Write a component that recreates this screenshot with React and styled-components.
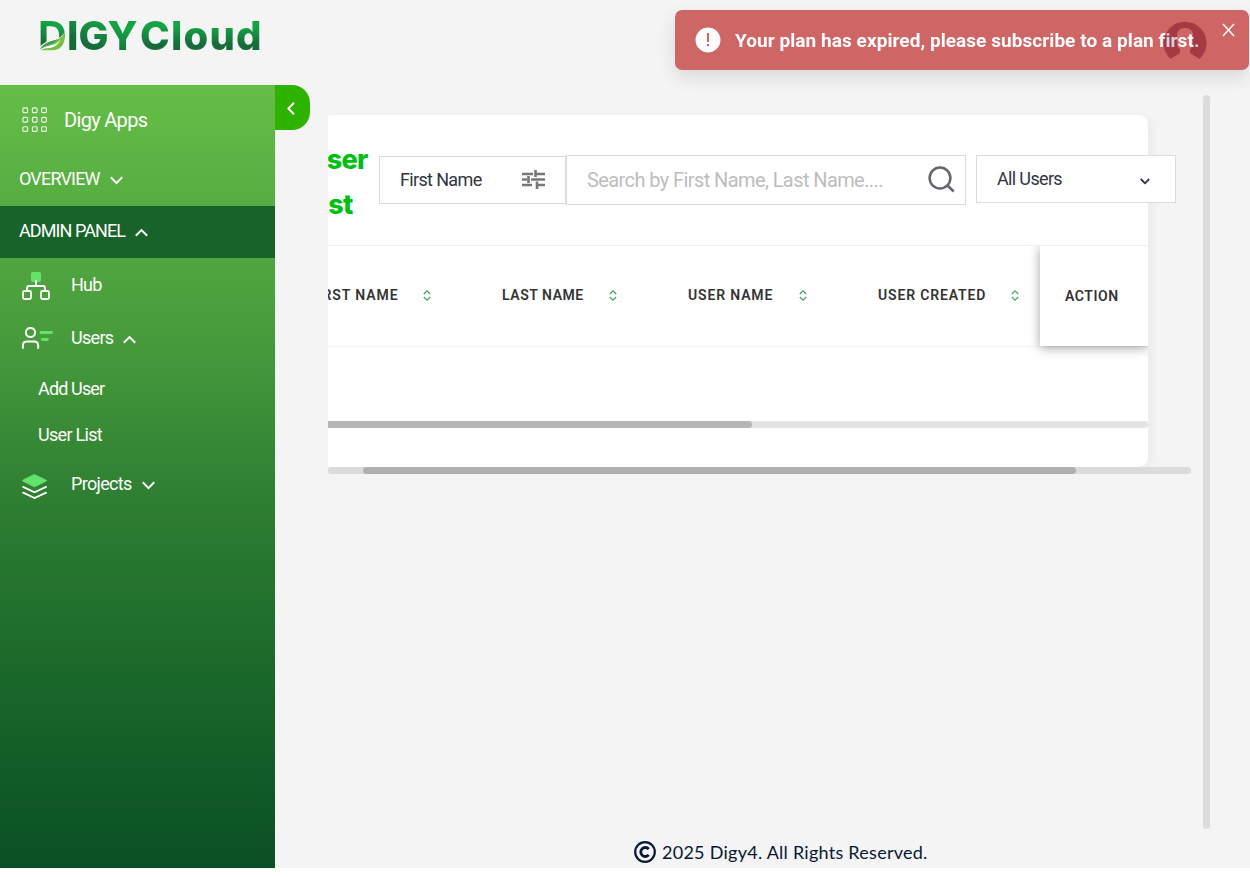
import React from "react";
import styled, { createGlobalStyle, css } from "styled-components";

const Global = createGlobalStyle`
  *{box-sizing:border-box}
  html,body{margin:0;background:#fff}
  body{width:1250px;height:877px;overflow:hidden;font-family:Roboto,"Noto Sans",sans-serif}
  button{border:0;padding:0;margin:0;background:none;font:inherit;color:inherit}
  svg{display:block;flex:none}
`;

const Page = styled.div`
  position: relative;
  width: 1250px;
  height: 868px;
  background: #f4f4f4;
  display: flex;
  flex-direction: column;
  overflow: hidden;
`;
const Header = styled.header`
  height: 85px;
  flex: none;
  padding: 15px 0 0 38px;
`;
const Logo = styled.div`
  position: relative;
  display: flex;
  width: 228px;
  height: 42px;
`;
const LogoWord = styled.span`
  font: ${(p) => p.$weight || 800} 40px/42px Inter, sans-serif;
  white-space: nowrap;
  letter-spacing: ${(p) => p.$spacing}px;
  width: ${(p) => p.$width}px;
  background: linear-gradient(${(p) => p.$angle}deg, #176b3b 30%, #15a344 72%);
  background-clip: text;
  -webkit-background-clip: text;
  color: transparent;
`;
const Leaf = styled.svg`
  position: absolute;
  left: 1px;
  top: 14px;
`;
const Body = styled.div`
  flex: 1;
  display: flex;
  min-height: 0;
`;
const Sidebar = styled.nav`
  width: 275px;
  flex: none;
  color: #fff;
  background: linear-gradient(180deg, #65be48 0%, #54aa40 18%, #46993b 34%, #2e7e32 53%, #1a672a 76%, #095024 100%);
`;
const NavRow = styled.div`
  display: flex;
  align-items: center;
  height: ${(p) => p.$h}px;
  padding-left: ${(p) => p.$pad || 0}px;
  padding-bottom: ${(p) => p.$lift || 0}px;
  background: ${(p) => (p.$active ? "#186329" : "transparent")};
`;
const IconSlot = styled.span`
  width: ${(p) => p.$w}px;
  padding-top: ${(p) => p.$drop || 0}px;
  flex: none;
`;
const NavText = styled.span`
  font-size: ${(p) => p.$size || 18}px;
  letter-spacing: ${(p) => p.$ls || 0}px;
  line-height: 24px;
  white-space: nowrap;
`;
const Arrow = styled.svg`
  margin: 2px 0 0 ${(p) => p.$gap || 9}px;
`;
const Collapse = styled.button`
  width: 35px;
  height: 45px;
  flex: none;
  padding: 2px 3px 0 0;
  border-radius: 0 18px 18px 0;
  background: #2eb400;
  display: grid;
  place-items: center;
`;
const Main = styled.main`
  flex: 1;
  min-width: 0;
  display: flex;
  flex-direction: column;
`;
const Scroller = styled.div`
  height: 744px;
  display: flex;
  justify-content: space-between;
  padding: 10px 40px 0 18px;
`;
const Content = styled.div`
  width: 863px;
  padding-top: 20px;
`;
const Rail = styled.div`
  width: 7px;
  height: 734px;
  border-radius: 4px;
  background: #dbdbdb;
`;
const Card = styled.section`
  width: 820px;
  height: 352px;
  background: #fff;
  border-radius: 0 9px 9px 0;
  box-shadow: 4px 2px 8px rgba(0, 0, 0, 0.045);
`;
const Toolbar = styled.div`
  width: 848px;
  height: 130px;
  display: flex;
  padding-top: 39.5px;
`;
const TitleClip = styled.div`
  width: 51px;
  height: 92px;
  margin-top: -18px;
  overflow: hidden;
  display: flex;
  flex-direction: column;
`;
const TitleLine = styled.span`
  font: 800 27px/45px Inter, sans-serif;
  color: #00bf13;
  letter-spacing: ${(p) => p.$ls}px;
  margin-left: ${(p) => p.$shift}px;
  white-space: nowrap;
`;
const Field = styled.div`
  display: flex;
  justify-content: space-between;
  align-items: center;
  width: ${(p) => p.$w}px;
  height: ${(p) => p.$h}px;
  margin: ${(p) => p.$m || "0"};
  padding: 0 ${(p) => p.$right}px 0 20px;
  border: 1px solid #dcdcdc;
  background: #fff;
  color: ${(p) => p.$color || "#303441"};
  font-size: ${(p) => p.$size || 18}px;
  letter-spacing: ${(p) => p.$ls || 0}px;
  white-space: nowrap;
`;
const SelectArrow = styled.svg`
  margin-top: 5px;
`;
const Table = styled.div`
  height: 102px;
  display: flex;
  border-top: 1.5px solid #edf0f4;
  border-bottom: 1px solid #f3f3f4;
`;
const HeadCell = styled.div`
  width: ${(p) => p.$w}px;
  display: flex;
  align-items: center;
  justify-content: space-between;
  padding: 0 0 2px ${(p) => p.$pad || 0}px;
  overflow: hidden;
  ${(p) => p.$gap && css`padding-right: ${p.$gap}px;`}
`;
const HeadText = styled.span`
  font-size: 14px;
  font-weight: 600;
  line-height: 18px;
  color: #333;
  letter-spacing: ${(p) => (p.$ls === undefined ? 0.85 : p.$ls)}px;
  white-space: nowrap;
  margin-left: ${(p) => p.$shift || 0}px;
`;
const ActionCell = styled.div`
  width: 108px;
  height: 100px;
  padding-left: 25px;
  display: flex;
  align-items: center;
  background: #fff;
  box-shadow: 0 2px 10px rgba(0, 0, 0, 0.36);
  clip-path: inset(0 0 -14px -14px);
`;
const Track = styled.div`
  width: ${(p) => p.$w}px;
  height: 7px;
  margin-top: ${(p) => p.$top || 0}px;
  padding-left: ${(p) => p.$start || 0}px;
  border-radius: ${(p) => (p.$flat ? "0 4px 4px 0" : "4px")};
  background: ${(p) => (p.$flat ? "#e4e4e4" : "#dbdbdb")};
`;
const Thumb = styled.div`
  width: ${(p) => p.$w}px;
  height: 7px;
  border-radius: ${(p) => (p.$flat ? "0 4px 4px 0" : "4px")};
  background: ${(p) => (p.$flat ? "#b6b6b6" : "#afafaf")};
`;
const Footer = styled.footer`
  flex: 1;
  display: flex;
  align-items: center;
  padding: 7px 0 0 324px;
  gap: 6px;
  color: #091833;
  font: 18px/24px Lato, sans-serif;
  letter-spacing: 0.26px;
`;
const Avatar = styled.svg`
  position: absolute;
  left: 1163px;
  top: 21px;
`;
const Toast = styled.div`
  position: absolute;
  left: 675px;
  top: 10px;
  width: 574px;
  height: 60px;
  border-radius: 7px;
  background: #c74343;
  opacity: 0.8;
  box-shadow: 0 7px 20px rgba(0, 0, 0, 0.15);
  color: #fff;
  display: flex;
  align-items: center;
  padding: 0 14px 0 20px;
`;
const ToastText = styled.span`
  width: 480px;
  margin-left: 14px;
  font-size: 19px;
  font-weight: 700;
  letter-spacing: 0.06px;
  white-space: nowrap;
`;
const Close = styled.button`
  align-self: flex-start;
  margin: 13px 0 0 auto;
`;

const Chevron = ({ up, gap }) => (
  <Arrow $gap={gap} width="13" height="9" viewBox="0 0 13 9" fill="none" stroke="#fff" strokeWidth="2">
    <path d={up ? "M.8 7.8 6.5 2.1l5.7 5.7" : "m.8 1.3 5.7 5.8 5.7-5.8"} />
  </Arrow>
);
const Sort = () => (
  <svg width="8" height="11" viewBox="0 0 8 11" fill="none" stroke="#4ba36d" strokeWidth="1.3">
    <path d="M.8 4 4 .9 7.2 4M.8 7 4 10.1 7.2 7" />
  </svg>
);
const AppsIcon = () => (
  <svg width="26" height="26" viewBox="0 0 26 26" fill="none" stroke="#fff" strokeWidth="1.1" strokeOpacity=".88">
    {[0.9, 10.4, 19.7].map((y) =>
      [0.9, 10.4, 19.7].map((x) => <rect key={`${x}-${y}`} x={x} y={y} width="4.7" height="4.7" rx="1" />)
    )}
  </svg>
);
const HubIcon = () => (
  <svg width="28" height="28" viewBox="0 0 28 28" fill="none" stroke="#fff" strokeWidth="1.8">
    <rect x="9" y="0" width="10" height="10" rx="2" fill="#64e36c" stroke="none" />
    <path d="M14 8v6M5 19v-3q0-2 2-2h14q2 0 2 2v3" />
    <rect x="1" y="19" width="8" height="8" rx="1.4" />
    <rect x="19" y="19" width="8" height="8" rx="1.4" />
  </svg>
);
const UsersIcon = () => (
  <svg width="32" height="23" viewBox="0.5 0.5 32 23" fill="none" stroke="#fff" strokeWidth="2" strokeLinecap="round">
    <circle cx="9" cy="6" r="4.6" />
    <path d="M1.3 21.5v-2.2q0-4.3 4.3-4.3h6.8q4.3 0 4.3 4.3v2.2" />
    <path d="M19.5 6H30M20.8 13H26" stroke="#64e36c" strokeWidth="2.8" />
  </svg>
);
const LayersIcon = () => (
  <svg width="26" height="25" viewBox="0.5 0 26 25" fill="none" stroke="#fff" strokeWidth="1.8" strokeLinecap="round">
    <path d="m13 .7 11.7 5.5q.6.4 0 .8L13 12.8 1.3 7q-.6-.4 0-.8Z" fill="#64e36c" stroke="#64e36c" strokeWidth="1" />
    <path d="M1.6 12.9 13 18.3l11.6-5.4M1.6 18.6 13 24l11.6-5.4" />
  </svg>
);
const TuneIcon = () => (
  <svg width="23" height="19" viewBox="0 0 23 19" fill="none" stroke="#777" strokeWidth="2.6">
    <path d="M0 4h11M14 4h9M0 9.5h5M9 9.5h14M0 15h10M14 15h9M13.5 0v7M6.5 6v7M15 11.5V19" />
  </svg>
);

export default function App() {
  return (
    <>
      <Global />
      <Page>
        <Header>
          <Logo>
            <LogoWord $spacing={0} $width={29} $angle={20} $weight={700}>D</LogoWord>
            <LogoWord $spacing={0.1} $width={73} $angle={20}>IGY</LogoWord>
            <LogoWord $spacing={1.2} $width={126} $angle={0}>Cloud</LogoWord>
            <Leaf width="28" height="23" viewBox="0 0 28 23">
              <path d="M28 0 26 2Q24 9 13 11 4 13 0 19v4h28Z" fill="#f4f4f4" />
              <path d="M26.2 2.5Q24 9 16 11.2 4 13.5 1 20.3q4-3.2 10-4 7.5-1 11-6.3-3 7.5-11 9Q5 19 1.5 21.2H14Q26.5 21 26.2 2.5Z" fill="#74be43" />
              <path d="M18 10.5Q4 13.5 1 20.3q4-3.2 9-4 5-1 8-5.8Z" fill="#3fa447" />
            </Leaf>
          </Logo>
        </Header>
        <Body>
          <Sidebar>
            <NavRow $h={69} $pad={22}>
              <IconSlot $w={42}><AppsIcon /></IconSlot>
              <NavText $size={20} $ls={-0.68}>Digy Apps</NavText>
            </NavRow>
            <NavRow $h={52} $pad={19} $lift={2}>
              <NavText $ls={-0.83}>OVERVIEW</NavText><Chevron gap={10} />
            </NavRow>
            <NavRow $h={52} $pad={19} $lift={2} $active>
              <NavText $ls={-0.92}>ADMIN PANEL</NavText><Chevron up gap={10} />
            </NavRow>
            <NavRow $h={54} $pad={22}>
              <IconSlot $w={49} $drop={1}><HubIcon /></IconSlot><NavText $ls={-0.8}>Hub</NavText>
            </NavRow>
            <NavRow $h={53} $pad={22} $lift={1}>
              <IconSlot $w={49}><UsersIcon /></IconSlot><NavText $ls={-0.7}>Users</NavText><Chevron up gap={10} />
            </NavRow>
            <NavRow $h={48} $pad={38}><NavText $ls={-0.85}>Add User</NavText></NavRow>
            <NavRow $h={44} $pad={38}><NavText $ls={-0.7}>User List</NavText></NavRow>
            <NavRow $h={54} $pad={22}>
              <IconSlot $w={49} $drop={4}><LayersIcon /></IconSlot><NavText $ls={-0.68}>Projects</NavText><Chevron gap={10} />
            </NavRow>
          </Sidebar>
          <Collapse aria-label="Collapse menu">
            <svg width="8" height="13" viewBox="0 0 8 13" fill="none" stroke="#fff" strokeWidth="2"><path d="M7 .8 1.3 6.5 7 12.2" /></svg>
          </Collapse>
          <Main>
            <Scroller>
              <Content>
                <Card>
                  <Toolbar>
                    <TitleClip>
                      <TitleLine $shift={-20} $ls={-0.8}>User</TitleLine>
                      <TitleLine $shift={-21} $ls={-0.8}>List</TitleLine>
                    </TitleClip>
                    <Field $w={187} $h={48} $right={20} $m="1px 0 0" $ls={-0.65}>First Name<TuneIcon /></Field>
                    <Field $w={400} $h={50} $right={10} $color="#bdbdbd" $size={20} $ls={-0.59}>
                      Search by First Name, Last Name....
                      <svg width="27" height="27" viewBox="0 0 27 27" fill="none" stroke="#62676b" strokeWidth="2.5">
                        <circle cx="12" cy="12" r="10.4" /><path d="m19.5 19.5 6.2 6" />
                      </svg>
                    </Field>
                    <Field $w={200} $h={48} $right={25} $m="0 0 0 10px" $ls={-0.65}>
                      All Users
                      <SelectArrow width="10" height="7" viewBox="0 0 10 7" fill="none" stroke="#303441" strokeWidth="1.8"><path d="m.8 1 4.2 4.3L9.2 1" /></SelectArrow>
                    </Field>
                  </Toolbar>
                  <Table>
                    <HeadCell $w={103}><HeadText $shift={-19} $ls={0.9}>FIRST NAME</HeadText><Sort /></HeadCell>
                    <HeadCell $w={186} $pad={71}><HeadText $ls={0.55}>LAST NAME</HeadText><Sort /></HeadCell>
                    <HeadCell $w={190} $pad={71}><HeadText>USER NAME</HeadText><Sort /></HeadCell>
                    <HeadCell $w={233} $pad={71} $gap={21}><HeadText>USER CREATED</HeadText><Sort /></HeadCell>
                    <ActionCell><HeadText $ls={0.55}>ACTION</HeadText></ActionCell>
                  </Table>
                  <Track $w={820} $top={73.5} $flat><Thumb $w={424} $flat /></Track>
                </Card>
                <Track $w={863} $start={35}><Thumb $w={713} /></Track>
              </Content>
              <Rail />
            </Scroller>
            <Footer>
              <svg width="22" height="22" viewBox="0 0 22 22" fill="none" stroke="#091833" strokeWidth="2.2">
                <circle cx="11" cy="11" r="9.8" /><path d="M14.7 8.1a4.5 4.5 0 1 0 0 5.8" strokeWidth="2.8" />
              </svg>
              2025 Digy4. All Rights Reserved.
            </Footer>
          </Main>
        </Body>
        <Avatar width="44" height="44" viewBox="0 0 44 44">
          <path d="M7.5 38A21.5 21.5 0 1 1 36.5 38L27 32v-4q3-2 3-5v-8q0-8-8-8t-8 8v8q0 3 3 5v4Z" fill="#231a4b" />
        </Avatar>
        <Toast role="alert">
          <svg width="26" height="26" viewBox="0 0 26 26"><circle cx="13" cy="13" r="12.5" fill="#fff" /><path d="M13 6v9M13 17v2.3" stroke="#c74343" strokeWidth="2" /></svg>
          <ToastText>Your plan has expired, please subscribe to a plan first.</ToastText>
          <Close aria-label="Dismiss"><svg width="13" height="14" viewBox="0 0 13 14" stroke="#fff" strokeWidth="1.5"><path d="m1 1 11 12M12 1 1 13" /></svg></Close>
        </Toast>
      </Page>
    </>
  );
}
